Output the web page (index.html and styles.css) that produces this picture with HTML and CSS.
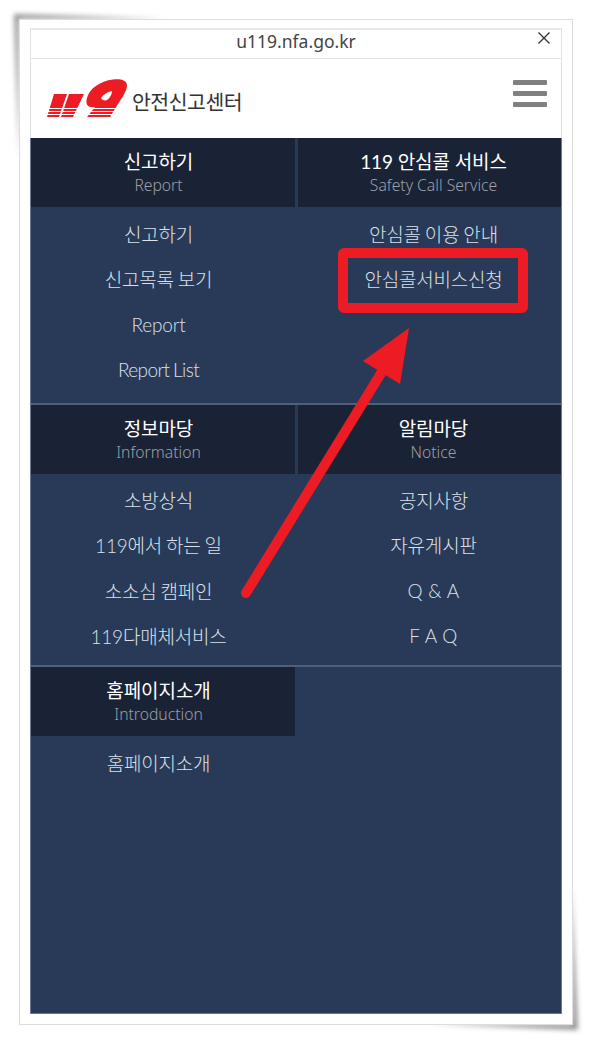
FILE: index.html
```html
<!DOCTYPE html>
<html lang="ko">
<head>
<meta charset="utf-8">
<title>안전신고센터</title>
<link rel="stylesheet" href="styles.css">
</head>
<body>
<div class="frame">
  <svg class="curl" width="592" height="1044" viewBox="0 0 592 1044">
    <defs><filter id="soft" x="-20%" y="-20%" width="140%" height="140%"><feGaussianBlur stdDeviation="2.8"/></filter></defs>
    <path d="M14 14 165 19 19 19 19 160Z" fill="#000" fill-opacity=".42" filter="url(#soft)"/>
    <path d="M578 1030 572 885 572 1024 430 1024Z" fill="#000" fill-opacity=".42" filter="url(#soft)"/>
  </svg>
  <div class="phone">
    <div class="urlbar">
      <span class="url">u119.nfa.go.kr</span>
      <svg class="close" width="14" height="14" viewBox="0 0 14 14"><path d="M1.500 1.500 12.500 12.500M12.500 1.500 1.500 12.500" stroke="#333" stroke-width="1.300" fill="none"/></svg>
    </div>
    <header class="site-head">
      <div class="brand">
        <svg class="logo" width="81" height="40" viewBox="0 0 81 40">
          <path fill="#ed1c24" d="M7 15H20L12 38H0ZM22 15H37L26 38H14Z"/>
          <path fill="#ed1c24" fill-rule="evenodd" d="M66 .5C73 -.5 80 1 80 6C80 12 75 19 71 25L63 38H40L48 28C41 29 38 26 40 19C42 10 53 2 66 .5ZM65 12C60 13 56 16 54 19C55 21 58 22 60 21C63 19 65 15 65 12Z"/>
          <path stroke="#fff" stroke-width="1" d="M0 29.500H81M0 32.500H81M0 35.500H81"/>
        </svg>
        <span class="brand-name">안전신고센터</span>
      </div>
      <div class="burger"><i></i><i></i><i></i></div>
    </header>
    <nav class="menu">
      <section class="row">
        <div class="col">
          <div class="col-head"><strong>신고하기</strong><span>Report</span></div>
          <ul><li>신고하기</li><li>신고목록 보기</li><li class="latin">Report</li><li class="latin tight">Report List</li></ul>
        </div>
        <div class="col">
          <div class="col-head"><strong>119 안심콜 서비스</strong><span>Safety Call Service</span></div>
          <ul><li>안심콜 이용 안내</li><li>안심콜서비스신청</li></ul>
        </div>
      </section>
      <section class="row">
        <div class="col">
          <div class="col-head"><strong>정보마당</strong><span>Information</span></div>
          <ul><li>소방상식</li><li>119에서 하는 일</li><li>소소심 캠페인</li><li>119다매체서비스</li></ul>
        </div>
        <div class="col">
          <div class="col-head"><strong>알림마당</strong><span>Notice</span></div>
          <ul><li>공지사항</li><li>자유게시판</li><li class="latin spaced">Q &amp; A</li><li class="latin spaced">F A Q</li></ul>
        </div>
      </section>
      <section class="row last">
        <div class="col">
          <div class="col-head"><strong>홈페이지소개</strong><span>Introduction</span></div>
          <ul><li>홈페이지소개</li></ul>
        </div>
      </section>
    </nav>
  </div>
  <svg class="markup" width="592" height="1044" viewBox="0 0 592 1044">
    <rect x="343" y="253" width="180" height="55" rx="1" fill="none" stroke="#ed1c24" stroke-width="10" stroke-linejoin="round"/>
    <path d="M246 593 383 370" stroke="#ed1c24" stroke-width="10" stroke-linecap="round" fill="none"/>
    <path d="M409 328 363 361 400 384Z" fill="#ed1c24"/>
  </svg>
</div>
</body>
</html>
```
FILE: styles.css
```css
* { box-sizing: border-box; }
html, body { margin: 0; padding: 0; background: #fff; }
body { width: 592px; height: 1044px; overflow: hidden; font-family: Lato, "Noto Sans CJK KR", sans-serif; }
.frame {
  position: relative;
  width: 592px;
  height: 1044px;
  padding: 19px;
}
.curl { position: absolute; left: 0; top: 0; z-index: 0; }
.phone {
  position: relative;
  z-index: 1;
  width: 554px;
  height: 1006px;
  border: 1px solid #ddd;
  background: #fff;
  padding: 8px 10px 10px 10px;
  display: flex;
  flex-direction: column;
}
.urlbar {
  height: 31px;
  flex: none;
  border: 1px solid #e2e2e2;
  border-top: 2px solid #e8e8e8;
  display: flex;
  align-items: center;
  justify-content: center;
  position: relative;
}
.url { font-family: "Noto Sans", sans-serif; font-size: 17.500px; color: #444; margin-top: -6px; }
.close { position: absolute; right: 10px; top: 1px; }
.site-head {
  height: 79px;
  flex: none;
  border-left: 1px solid #e0e0e0;
  border-right: 1px solid #e0e0e0;
  display: flex;
  align-items: center;
  justify-content: space-between;
  padding: 0 14px 0 16px;
}
.brand { display: flex; align-items: center; gap: 4px; }
.logo { display: block; }
.brand-name { font-family: "Noto Sans CJK KR", sans-serif; font-size: 20.500px; color: #333; letter-spacing: -.5px; margin-top: 4px; }
.burger { display: flex; flex-direction: column; gap: 5.500px; margin-bottom: 10px; }
.burger i { display: block; width: 34px; height: 5.500px; background: #808080; border-radius: 1px; }
.menu { flex: 1; background: #283a58; border: solid #6b7a92; border-width: 0 1px 1px 1px; }
.row {
  display: grid;
  grid-template-columns: 264px 263px;
  justify-content: space-between;
  height: 267px;
  border-bottom: 2px solid #4f6079;
}
.row:nth-child(2) { height: 262px; }
.row:nth-child(2) ul { padding-top: 4px; }
.row.last { border-bottom: 0; height: auto; }
.col:first-child .col-head, .col:first-child ul { padding-right: 9px; }
.col:last-child .col-head, .col:last-child ul { padding-left: 8px; }
.row.last .col:last-child .col-head, .row.last .col:last-child ul { padding-left: 0; }
.col-head {
  height: 69px;
  background: #1a2336;
  display: flex;
  flex-direction: column;
  align-items: center;
  padding-top: 10px;
}
.col-head strong { font-weight: 400; font-size: 19px; line-height: 27px; color: #fff; letter-spacing: -.1px; }
.col-head span { font-family: "Noto Sans", sans-serif; font-weight: 300; font-size: 15.700px; line-height: 20px; color: #9c9fa6; }
ul { list-style: none; margin: 0; padding: 5px 0 0; }
li { height: 45.400px; line-height: 45px; text-align: center; font-size: 19px; font-weight: 300; color: #dde1e8; letter-spacing: -.2px; word-spacing: -1px; }
li.latin { line-height: 43px; }
li.tight { letter-spacing: -.6px; }
li.spaced { letter-spacing: .3px; word-spacing: 0; }
.markup { position: absolute; left: 0; top: 0; z-index: 2; pointer-events: none; }
```
